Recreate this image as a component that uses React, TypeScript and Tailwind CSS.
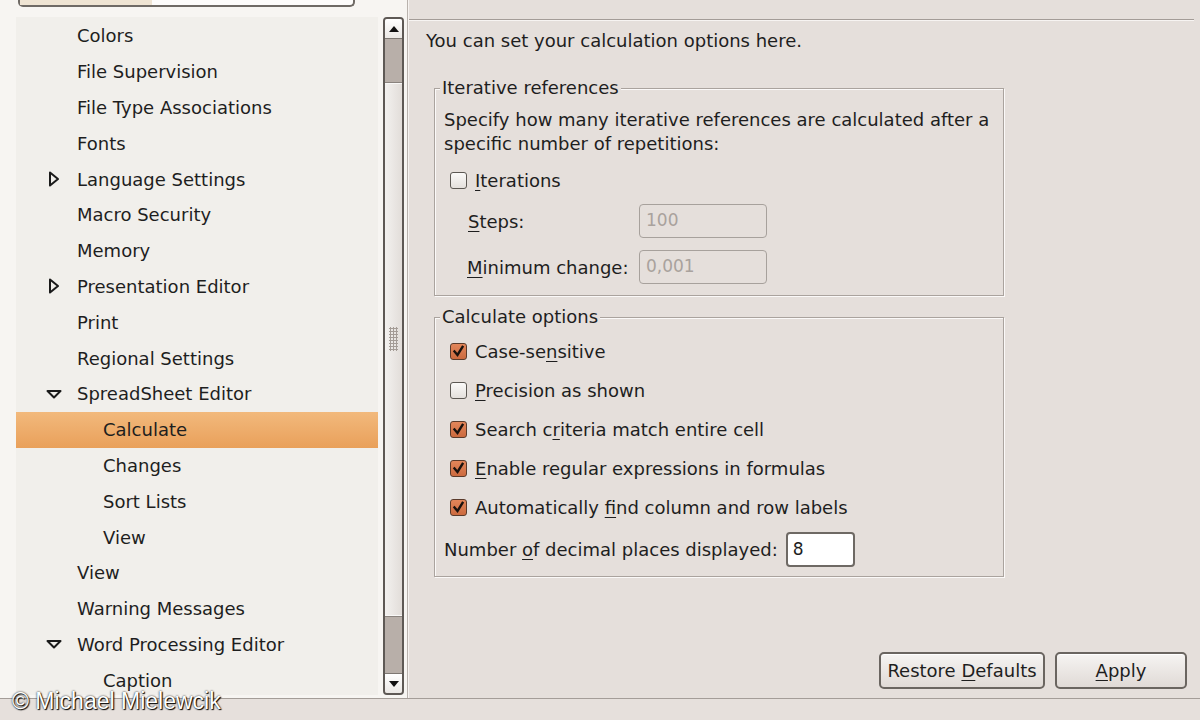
import React from 'react';

type Node = { label: string; level: 1 | 2; expander?: 'right' | 'down'; selected?: boolean };

const tree: Node[] = [
  { label: 'Colors', level: 1 },
  { label: 'File Supervision', level: 1 },
  { label: 'File Type Associations', level: 1 },
  { label: 'Fonts', level: 1 },
  { label: 'Language Settings', level: 1, expander: 'right' },
  { label: 'Macro Security', level: 1 },
  { label: 'Memory', level: 1 },
  { label: 'Presentation Editor', level: 1, expander: 'right' },
  { label: 'Print', level: 1 },
  { label: 'Regional Settings', level: 1 },
  { label: 'SpreadSheet Editor', level: 1, expander: 'down' },
  { label: 'Calculate', level: 2, selected: true },
  { label: 'Changes', level: 2 },
  { label: 'Sort Lists', level: 2 },
  { label: 'View', level: 2 },
  { label: 'View', level: 1 },
  { label: 'Warning Messages', level: 1 },
  { label: 'Word Processing Editor', level: 1, expander: 'down' },
  { label: 'Caption', level: 2 },
];

function Expander({ dir }: { dir: 'right' | 'down' }) {
  return (
    <svg width="16" height="16" viewBox="0 0 16 16" className="shrink-0">
      {dir === 'right' ? (
        <path d="M4 1.5 L12 8 L4 14.5 Z" fill="none" stroke="#1a1a1a" strokeWidth="2" strokeLinejoin="round" />
      ) : (
        <path d="M1.5 5 L14.5 5 L8 11.5 Z" fill="none" stroke="#1a1a1a" strokeWidth="2" strokeLinejoin="round" />
      )}
    </svg>
  );
}

function U({ children }: { children: React.ReactNode }) {
  return <span className="underline underline-offset-[3px] decoration-1">{children}</span>;
}

function Checkbox({ checked }: { checked?: boolean }) {
  return checked ? (
    <span className="w-[17px] h-[17px] shrink-0 rounded-[3px] border border-[#5a3a2a] bg-gradient-to-b from-[#e2865a] to-[#cc6a3e] flex items-center justify-center">
      <svg width="13" height="13" viewBox="0 0 13 13">
        <path d="M2.5 6.5 L5.5 10 L10.5 2" fill="none" stroke="#1a120e" strokeWidth="2.4" strokeLinecap="square" />
      </svg>
    </span>
  ) : (
    <span className="w-[17px] h-[17px] shrink-0 rounded-[3px] border border-[#5c5853] bg-gradient-to-b from-[#fbfaf9] to-[#e4e0dc]" />
  );
}

function CheckRow({ checked, children }: { checked?: boolean; children: React.ReactNode }) {
  return (
    <div className="flex items-center gap-[8px] h-[39px] pl-[15px]">
      <Checkbox checked={checked} />
      <span>{children}</span>
    </div>
  );
}

function GroupBox({ title, className, children }: { title: string; className?: string; children: React.ReactNode }) {
  return (
    <div className={'relative ml-[25px] w-[570px] border border-[#aaa39e] shadow-[inset_1px_1px_0_#fbf9f8,1px_1px_0_#fbf9f8] ' + (className ?? '')}>
      <span className="absolute -top-[13px] left-[5px] bg-[#e5dfdb] px-[2px] leading-[24px]">{title}</span>
      {children}
    </div>
  );
}

export default function App() {
  return (
    <div className="w-[1200px] h-[720px] overflow-hidden relative flex flex-col bg-[#e5dfdb] text-[#1e1e1e] font-['DejaVu_Sans','Liberation_Sans',sans-serif] text-[18px]">
      <div className="flex flex-1 min-h-0">
        {/* left: tree list */}
        <div className="w-[408px] shrink-0 flex flex-col bg-[#f7f5f2] border-r border-[#b9b2ad]">
          <div className="h-[17px] shrink-0 pl-[18px]">
            <div className="w-[337px] h-[7px] border-2 border-t-0 border-[#6f6a65] rounded-b-[5px] bg-[#fdfcfb] flex">
              <div className="w-[132px] h-full bg-[#efe4d3]" />
            </div>
          </div>
          <div className="flex flex-1 min-h-0 pb-[3px]">
            <div className="ml-[16px] w-[362px] flex flex-col pt-[1px] bg-[#f1efeb] overflow-hidden">
              {tree.map((n, i) => (
                <div
                  key={i}
                  className={
                    'h-[35.8px] shrink-0 flex items-center ' +
                    (n.selected ? 'bg-gradient-to-b from-[#f2b97c] to-[#e9a05a] ' : '')
                  }
                >
                  <div className="w-[61px] shrink-0 flex justify-end pr-[15px]">
                    {n.expander && <Expander dir={n.expander} />}
                  </div>
                  <span className={'whitespace-nowrap ' + (n.level === 2 ? 'pl-[26px]' : '')}>{n.label}</span>
                </div>
              ))}
            </div>
            {/* scrollbar */}
            <div className="ml-[5px] w-[21px] flex flex-col border-2 border-[#5e5955] rounded-[4px] overflow-hidden bg-[#b8afa9]">
              <div className="h-[20px] shrink-0 bg-gradient-to-b from-[#ffffff] to-[#ebe8e5] border-b border-[#7d7772] flex items-center justify-center">
                <svg width="10" height="6" viewBox="0 0 10 6"><path d="M0 6 L5 0 L10 6 Z" fill="#111" /></svg>
              </div>
              <div className="h-[44px] shrink-0" />
              <div className="flex-1 bg-gradient-to-r from-[#f3f1ef] to-[#e2ddd9] border-y border-[#f9f8f7] flex items-center justify-center shadow-[0_1px_0_#8a837e,0_-1px_0_#8a837e]">
                <div className="w-[9px] h-[24px] bg-[radial-gradient(#a49c96_1px,transparent_1.2px)] bg-[length:3px_3px] -mt-[22px]" />
              </div>
              <div className="h-[57px] shrink-0" />
              <div className="h-[20px] shrink-0 bg-gradient-to-b from-[#ffffff] to-[#ebe8e5] border-t border-[#7d7772] flex items-center justify-center">
                <svg width="10" height="6" viewBox="0 0 10 6"><path d="M0 0 L10 0 L5 6 Z" fill="#111" /></svg>
              </div>
            </div>
          </div>
        </div>

        {/* right: options page */}
        <div className="flex-1 flex flex-col border-l border-[#f6f3f1] pr-[6px]">
          <div className="h-[20px] shrink-0 border-b border-[#a39c97] shadow-[0_1px_0_#f7f4f2]" />
          <div className="pl-[17px] pt-[10px] leading-[22px]">You can set your calculation options here.</div>

          <GroupBox title="Iterative references" className="mt-[36px] h-[208px]">
            <div className="pl-[9px] pt-[19px] leading-[24px]">
              Specify how many iterative references are calculated after a
              <br />
              specific number of repetitions:
            </div>
            <div className="flex items-center gap-[8px] pl-[15px] mt-[11px]">
              <Checkbox />
              <span><U>I</U>terations</span>
            </div>
            <div className="flex items-center mt-[10px] pl-[33px] h-[34px]">
              <span className="w-[171px]"><U>S</U>teps:</span>
              <div className="w-[128px] h-[34px] rounded-[4px] border border-[#a7a19c] text-[#a9a29d] flex items-center pl-[6px] text-[17px]">100</div>
            </div>
            <div className="flex items-center mt-[12px] pl-[32px] h-[34px]">
              <span className="w-[172px]"><U>M</U>inimum change:</span>
              <div className="w-[128px] h-[34px] rounded-[4px] border border-[#a7a19c] text-[#a9a29d] flex items-center pl-[6px] text-[17px]">0,001</div>
            </div>
          </GroupBox>

          <GroupBox title="Calculate options" className="mt-[21px] h-[260px]">
            <div className="pt-[14px]">
              <CheckRow checked>Case-se<U>n</U>sitive</CheckRow>
              <CheckRow><U>P</U>recision as shown</CheckRow>
              <CheckRow checked>Search c<U>r</U>iteria match entire cell</CheckRow>
              <CheckRow checked><U>E</U>nable regular expressions in formulas</CheckRow>
              <CheckRow checked>Automatically <U>f</U>ind column and row labels</CheckRow>
              <div className="flex items-center gap-[8px] pl-[9px] mt-[5px]">
                <span>Number <U>o</U>f decimal places displayed:</span>
                <div className="w-[69px] h-[35px] rounded-[4px] border-2 border-[#6e6964] bg-white flex items-center pl-[5px] text-[17px]">8</div>
              </div>
            </div>
          </GroupBox>

          <div className="mt-auto flex justify-end gap-[10px] pb-[9px] pr-[7px]">
            <button className="w-[166px] h-[37px] rounded-[5px] border-2 border-[#6a6560] bg-gradient-to-b from-[#f6f4f2] to-[#e0dad6] shadow-[inset_0_1px_0_#fff]">
              Restore <U>D</U>efaults
            </button>
            <button className="w-[132px] h-[37px] rounded-[5px] border-2 border-[#6a6560] bg-gradient-to-b from-[#f6f4f2] to-[#e0dad6] shadow-[inset_0_1px_0_#fff]">
              <U>A</U>pply
            </button>
          </div>
        </div>
      </div>

      <div className="h-[22px] shrink-0 border-t border-[#a49d98] bg-[#e6e0dc]" />

      <div className="absolute left-[12px] top-[684px] text-white text-[23px] font-['Liberation_Sans',sans-serif] [text-shadow:0_0_2px_#000,1px_1px_1px_#000]">
        © Michael Mielewcik
      </div>
    </div>
  );
}
